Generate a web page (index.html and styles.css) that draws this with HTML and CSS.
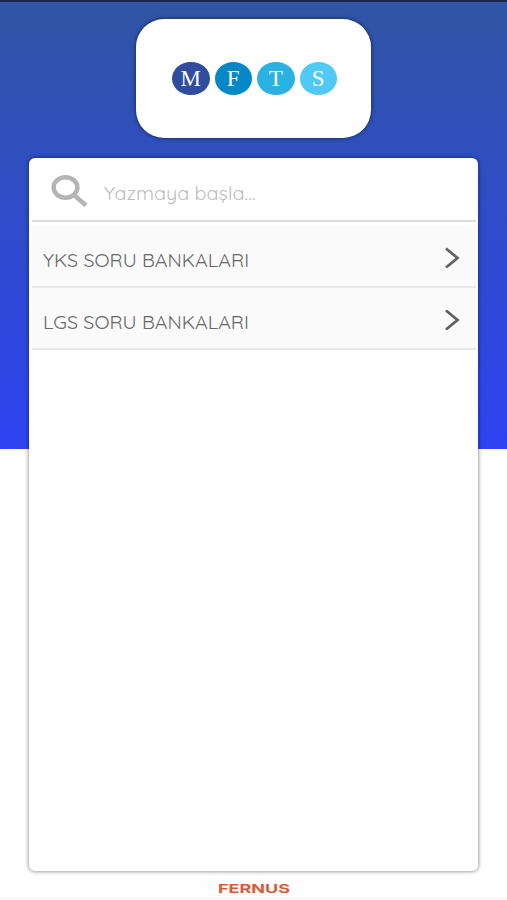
FILE: index.html
```
<!DOCTYPE html>
<html lang="tr">
<head>
    <meta charset="UTF-8">
    <title>MFTS</title>
    <link rel="stylesheet" href="styles.css">
</head>
<body>
<div class="logoCard">
    <span class="letter letterM">M</span>
    <span class="letter letterF">F</span>
    <span class="letter letterT">T</span>
    <span class="letter letterS">S</span>
</div>
<div class="panel">
    <div class="search">
        <svg class="searchIcon" width="37" height="34" viewBox="0 0 37 34">
            <ellipse cx="14.5" cy="12.5" rx="11.9" ry="10.2"/>
            <path d="M23 20 L35 30.5"/>
        </svg>
        <input type="text" class="searchInput" placeholder="Yazmaya başla...">
    </div>
    <div class="list">
        <div class="item">
            <span class="itemText">YKS SORU BANKALARI</span>
            <svg class="arrow" width="16" height="22" viewBox="0 0 16 22">
                <path d="M2 1.5 L13.5 11 L2 20.5"/>
            </svg>
        </div>
        <div class="item">
            <span class="itemText">LGS SORU BANKALARI</span>
            <svg class="arrow" width="16" height="22" viewBox="0 0 16 22">
                <path d="M2 1.5 L13.5 11 L2 20.5"/>
            </svg>
        </div>
    </div>
</div>
<div class="footer"><span class="brand">FERNUS</span></div>
</body>
</html>
```

FILE: styles.css
```
* {
    box-sizing: border-box;
}

body {
    margin: 0;
    height: 900px;
    padding-top: 17px;
    border-top: 2px solid #19264f;
    background: #fefefe linear-gradient(#2f55a3, #2e43f2) no-repeat;
    background-size: 100% 449px;
    font-family: Quicksand, Inter, sans-serif;
    overflow: hidden;
}

.logoCard {
    display: flex;
    justify-content: center;
    align-items: center;
    gap: 5px;
    width: 235px;
    height: 119px;
    margin: 0 auto;
    padding-left: 2px;
    border-radius: 28px;
    background: #fff;
    box-shadow: 0 0 4px rgba(0, 0, 0, 0.6);
}

.letter {
    width: 37.5px;
    height: 33px;
    border-radius: 50%;
    color: #fff;
    font: 23px/34px "Liberation Serif", serif;
    text-align: center;
}

.letterM {
    background: #2f4c9e;
}

.letterF {
    background: #0788c6;
}

.letterT {
    background: #2bb0e2;
}

.letterS {
    background: #50caf5;
}

.panel {
    width: 449px;
    height: 713px;
    margin: 20px auto 0;
    padding: 0 2px 0 3px;
    border-radius: 6px;
    background: #fff;
    box-shadow: 0 0 4px rgba(0, 0, 0, 0.55);
}

.search {
    display: flex;
    height: 64px;
    padding: 17px 0 0 19px;
    border-bottom: 2px solid #dcdcdc;
}

.searchIcon {
    fill: none;
    stroke: #b5b5b5;
    stroke-width: 4.4;
    flex: none;
}

.searchInput {
    width: 300px;
    height: 36px;
    margin-left: 16px;
    padding: 0;
    border: none;
    outline: none;
    background: none;
    font: 400 18px Quicksand, Inter, sans-serif;
    transform: scaleX(1.1);
    transform-origin: left;
}

.searchInput::placeholder {
    color: #bcbcbc;
}

.list {
    padding-top: 4px;
}

.item {
    display: flex;
    justify-content: space-between;
    align-items: center;
    height: 62px;
    padding: 3px 16px 0 11px;
    border-bottom: 2px solid #e8e8e8;
    background: #fafafa;
}

.itemText {
    padding-top: 6px;
    color: #686868;
    font-size: 18px;
    font-weight: 400;
    transform: scaleX(1.092);
    transform-origin: left;
}

.arrow {
    fill: none;
    stroke: #626262;
    stroke-width: 2.8;
}

.footer {
    height: 28px;
    padding-top: 6px;
    border-bottom: 1px solid #f2f2f2;
    text-align: center;
}

.brand {
    display: inline-block;
    color: #db5a38;
    font: bold 12px/16px Inter, sans-serif;
    transform: scaleX(1.5);
}
```
